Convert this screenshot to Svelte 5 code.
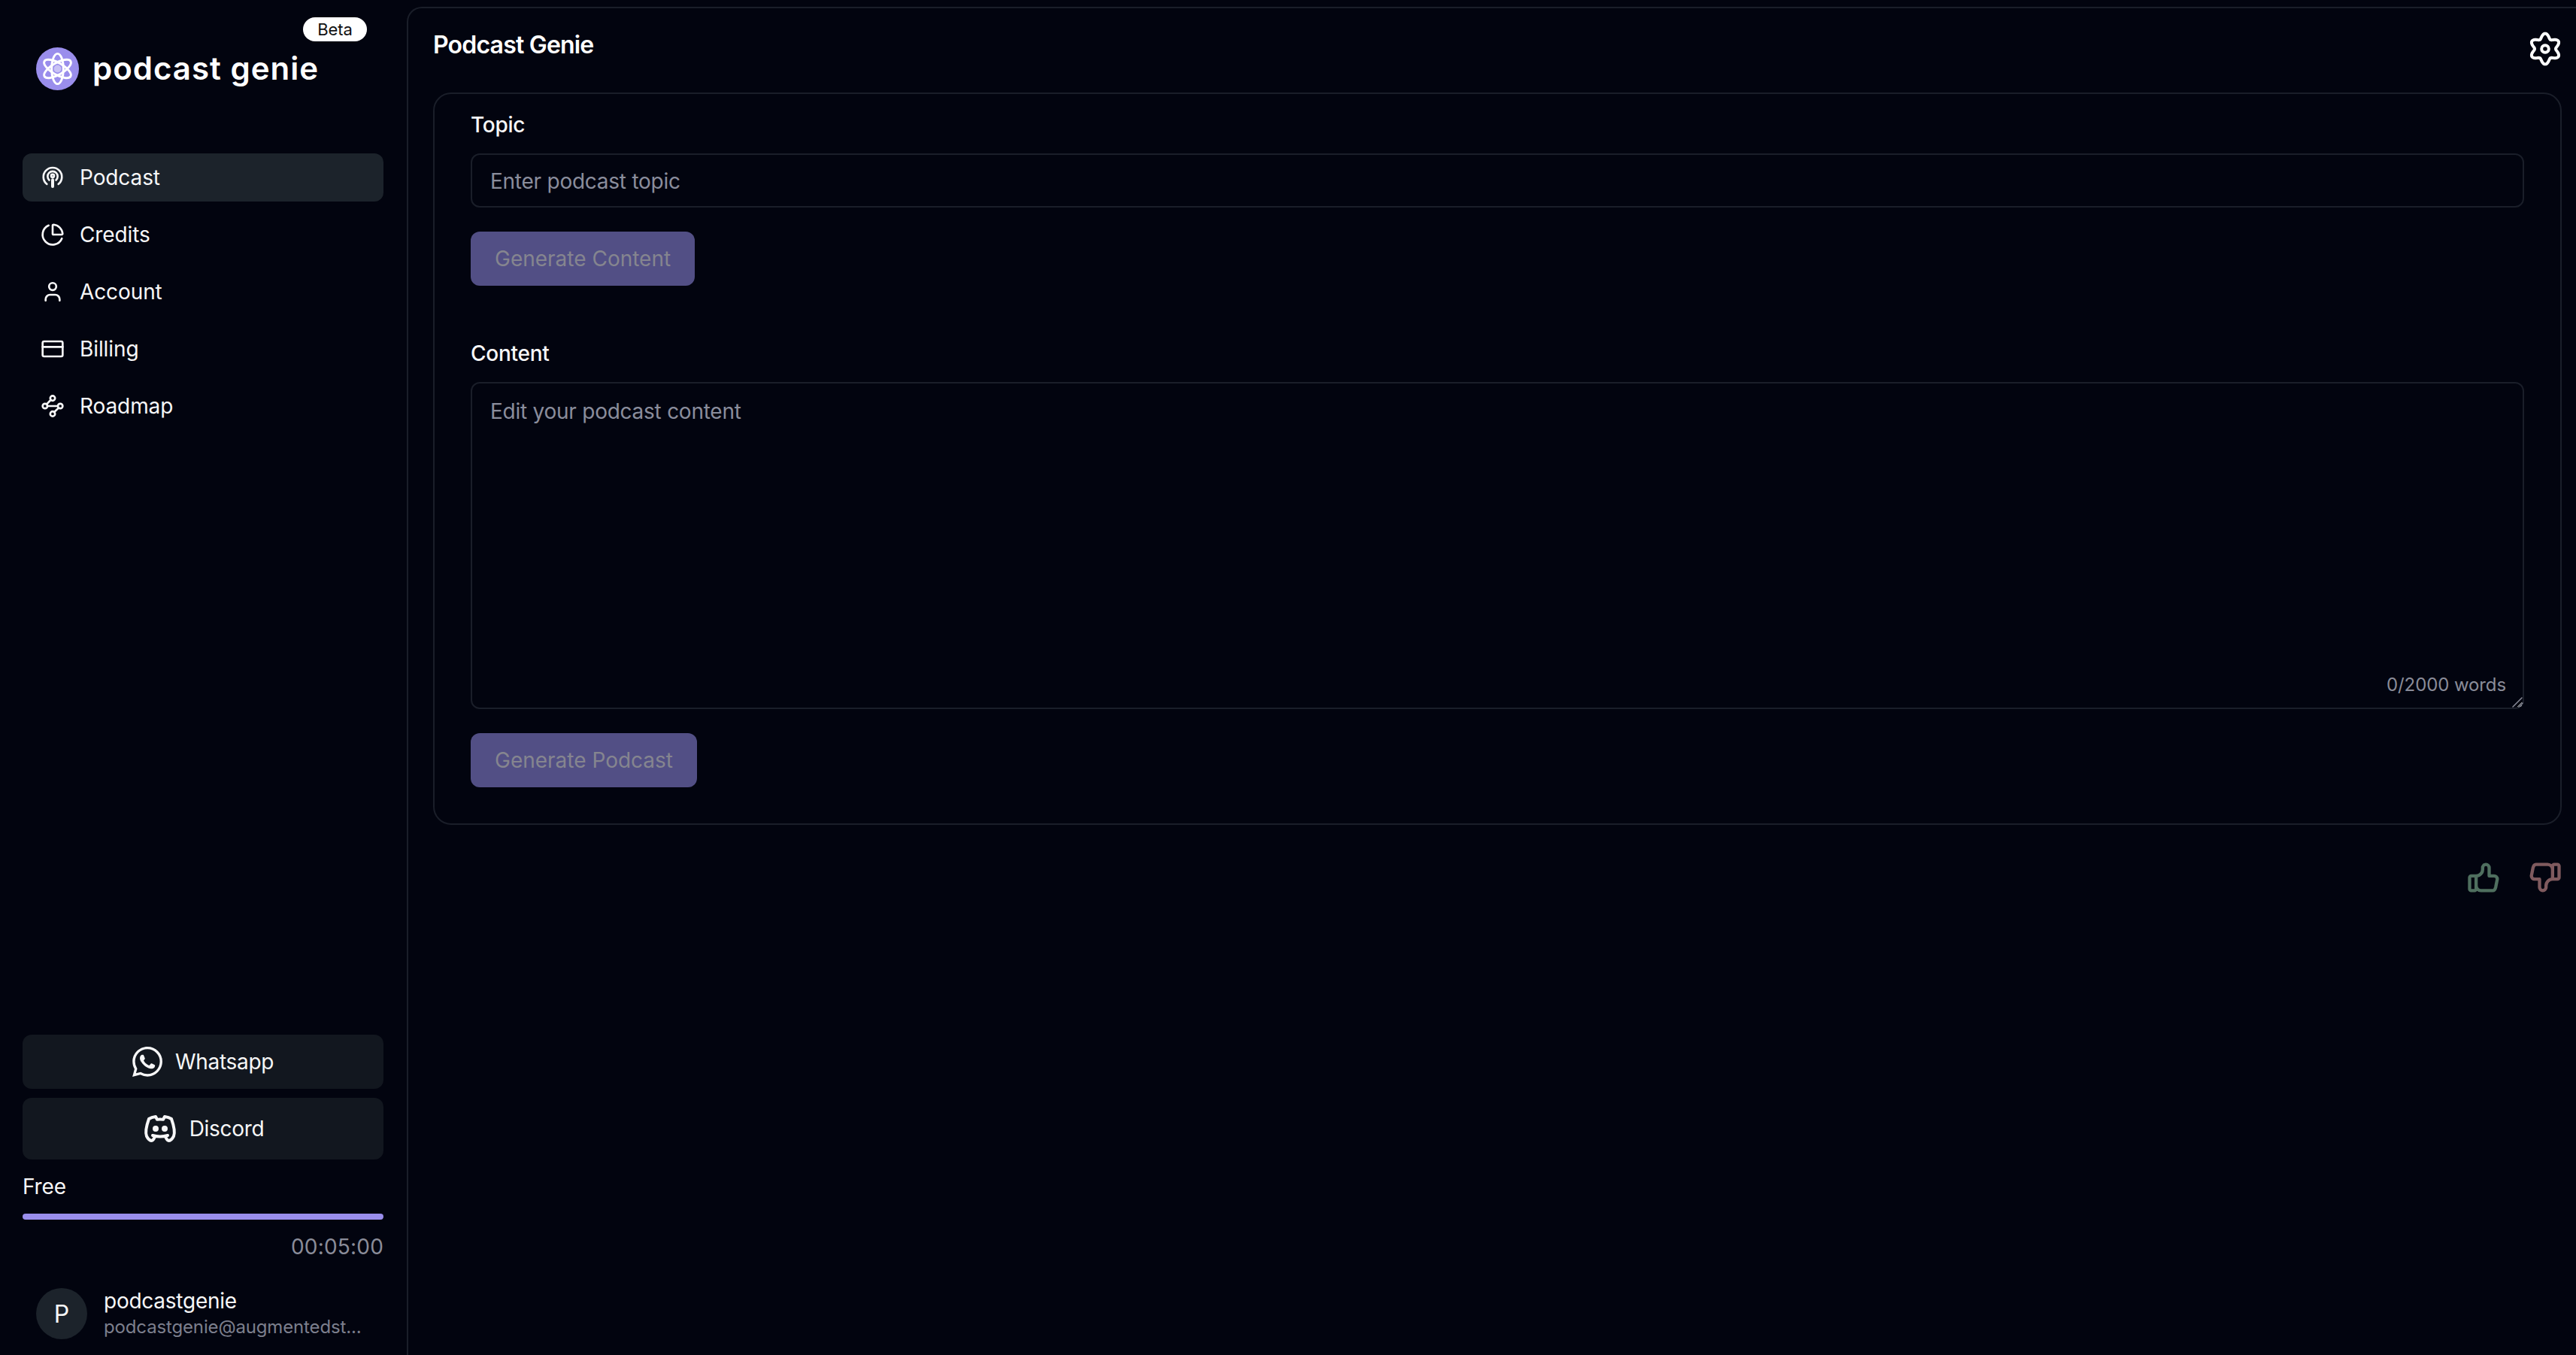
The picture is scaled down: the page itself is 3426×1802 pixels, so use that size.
<script>
  const nav = ['Podcast', 'Credits', 'Account', 'Billing', 'Roadmap'];

  // six lobed cog outline, sampled in polar form
  const cog = Array.from({ length: 120 }, (_, i) => {
    const t = (i / 120) * Math.PI * 2;
    const r = 8.6 + 1.6 * Math.cos(6 * t);
    return `${(12 + r * Math.sin(t)).toFixed(2)} ${(12 - r * Math.cos(t)).toFixed(2)}`;
  });
  const cogPath = 'M' + cog.join('L') + 'Z';
</script>

<div class="app">
  <aside class="sidebar">
    <span class="beta">Beta</span>
    <div class="brand">
      <svg class="logo" viewBox="0 0 58 58">
        <circle cx="29" cy="29" r="29" fill="#9a8eec" />
        <g fill="none" stroke="#fff" stroke-width="3">
          <ellipse cx="29" cy="29" rx="20.5" ry="8" transform="rotate(30 29 29)" />
          <ellipse cx="29" cy="29" rx="20.5" ry="8" transform="rotate(90 29 29)" />
          <ellipse cx="29" cy="29" rx="20.5" ry="8" transform="rotate(150 29 29)" />
        </g>
        <circle cx="29" cy="29" r="5" fill="#c9c2f5" />
      </svg>
      <span class="wordmark">podcast genie</span>
    </div>

    <nav class="nav">
      {#each nav as item, i}
        <a class="nav-item" class:active={i === 0} href="#top">
          <svg class="icon" viewBox="0 0 24 24">
            {#if item === 'Podcast'}
              <path d="M6.2 18.6a9.2 9.2 0 1 1 11.6 0" />
              <path d="M8.6 14.6a5 5 0 1 1 6.8 0" />
              <circle cx="12" cy="10.4" r="1.5" />
              <path d="M12 14.5v6.5" stroke-width="3" />
            {:else if item === 'Credits'}
              <path d="M21 12c.552 0 1.005-.449.95-.998a10 10 0 0 0-8.953-8.951c-.55-.055-.998.398-.998.95v8a1 1 0 0 0 1 1z" />
              <path d="M21.21 15.89A10 10 0 1 1 8 2.83" />
            {:else if item === 'Account'}
              <circle cx="12" cy="6.8" r="3.6" />
              <path d="M5 20.8v-1.3a4.5 4.5 0 0 1 4.5-4.5h5a4.5 4.5 0 0 1 4.5 4.5v1.3" />
            {:else if item === 'Billing'}
              <rect x="2" y="4.5" width="20" height="15" rx="1.5" />
              <path d="M2 10h20" />
            {:else}
              <circle cx="12" cy="4.2" r="2.4" />
              <circle cx="4.4" cy="12" r="2.4" />
              <circle cx="19.6" cy="12" r="2.4" />
              <circle cx="12" cy="19.8" r="2.4" />
              <path d="M10.2 5.8 6 10.2M6.8 12h10.4M13.6 18l4.4-4.2" />
            {/if}
          </svg>
          <span>{item}</span>
        </a>
      {/each}
    </nav>

    <div class="foot">
      <button class="social whatsapp">
        <svg class="wa" viewBox="0 0 24 24">
          <path d="M17.472 14.382c-.297-.149-1.758-.867-2.03-.967-.273-.099-.471-.148-.67.15-.197.297-.767.966-.94 1.164-.173.199-.347.223-.644.075-.297-.15-1.255-.463-2.39-1.475-.883-.788-1.48-1.761-1.653-2.059-.173-.297-.018-.458.13-.606.134-.133.298-.347.446-.52.149-.174.198-.298.298-.497.099-.198.05-.371-.025-.52-.075-.149-.669-1.612-.916-2.207-.242-.579-.487-.5-.669-.51-.173-.008-.371-.01-.57-.01-.198 0-.52.074-.792.372-.272.297-1.04 1.016-1.04 2.479 0 1.462 1.065 2.875 1.213 3.074.149.198 2.096 3.2 5.077 4.487.709.306 1.262.489 1.694.625.712.227 1.36.195 1.871.118.571-.085 1.758-.719 2.006-1.413.248-.694.248-1.289.173-1.413-.074-.124-.272-.198-.57-.347m-5.421 7.403h-.004a9.87 9.87 0 01-5.031-1.378l-.361-.214-3.741.982.998-3.648-.235-.374a9.86 9.86 0 01-1.51-5.26c.001-5.45 4.436-9.884 9.888-9.884 2.64 0 5.122 1.03 6.988 2.898a9.825 9.825 0 012.893 6.994c-.003 5.45-4.437 9.884-9.885 9.884m8.413-18.297A11.815 11.815 0 0012.05 0C5.495 0 .16 5.335.157 11.892c0 2.096.547 4.142 1.588 5.945L.057 24l6.305-1.654a11.882 11.882 0 005.683 1.448h.005c6.554 0 11.89-5.335 11.893-11.893a11.821 11.821 0 00-3.48-8.413z" />
        </svg>
        Whatsapp
      </button>
      <button class="social discord">
        <svg class="dc" viewBox="0 0 24 24">
          <path d="M8 12a1 1 0 1 0 2 0a1 1 0 0 0 -2 0" />
          <path d="M14 12a1 1 0 1 0 2 0a1 1 0 0 0 -2 0" />
          <path d="M15.5 17c0 1 1.5 3 2 3c1.5 0 2.833 -1.667 3.5 -3c.667 -1.667 .5 -5.833 -1.5 -11.5c-1.457 -1.015 -3 -1.34 -4.5 -1.5l-.972 1.923a11.913 11.913 0 0 0 -4.053 0l-.975 -1.923c-1.5 .16 -3.043 .485 -4.5 1.5c-2 5.667 -2.167 9.833 -1.5 11.5c.667 1.333 2 3 3.5 3c.5 0 2 -2 2 -3" />
          <path d="M7 16.5c3.5 1 6.5 1 10 0" />
        </svg>
        Discord
      </button>

      <div class="plan">Free</div>
      <div class="bar"><div class="fill" style="width: 100%"></div></div>
      <div class="time">00:05:00</div>

      <div class="user">
        <div class="avatar">P</div>
        <div class="who">
          <div class="name">podcastgenie</div>
          <div class="email">podcastgenie@augmentedst...</div>
        </div>
      </div>
    </div>
  </aside>

  <main class="main">
    <header class="top">
      <h1>Podcast Genie</h1>
      <svg class="gear" viewBox="0 0 24 24">
        <path d={cogPath} />
        <circle cx="12" cy="12" r="2.4" />
      </svg>
    </header>

    <section class="card">
      <label class="field">
        <span class="label">Topic</span>
        <input type="text" placeholder="Enter podcast topic" />
      </label>
      <button class="primary" disabled>Generate Content</button>

      <label class="field content">
        <span class="label">Content</span>
        <span class="area">
          <textarea placeholder="Edit your podcast content"></textarea>
          <span class="count">0/2000 words</span>
          <svg class="grip" viewBox="0 0 16 14">
            <path d="M2 13 14 1M10 13l5-5" />
          </svg>
        </span>
      </label>
      <button class="primary" disabled>Generate Podcast</button>
    </section>

    <div class="feedback">
      <svg class="thumb up" viewBox="0 0 24 24">
        <path d="M7 11v8a1 1 0 0 1 -1 1h-2a1 1 0 0 1 -1 -1v-7a1 1 0 0 1 1 -1h3a4 4 0 0 0 4 -4v-1a2 2 0 0 1 4 0v5h3a2 2 0 0 1 2 2l-1 5a2 3 0 0 1 -2 2h-7a3 3 0 0 1 -3 -3" />
      </svg>
      <svg class="thumb down" viewBox="0 0 24 24">
        <path d="M7 13v-8a1 1 0 0 0 -1 -1h-2a1 1 0 0 0 -1 1v7a1 1 0 0 0 1 1h3a4 4 0 0 1 4 4v1a2 2 0 0 0 4 0v-5h3a2 2 0 0 0 2 -2l-1 -5a2 3 0 0 0 -2 -2h-7a3 3 0 0 0 -3 3" />
      </svg>
    </div>
  </main>
</div>

<style>
  :global(body) {
    margin: 0;
    background: #02040f;
  }

  .app {
    display: flex;
    height: 100vh;
    overflow: hidden;
    background: #02040f;
    color: #f7f7f8;
    font-family: Inter, 'Liberation Sans', sans-serif;
    font-size: 28px;
    letter-spacing: -0.1px;
  }

  svg {
    flex: none;
    fill: none;
    stroke: currentColor;
    stroke-width: 2;
    stroke-linecap: round;
    stroke-linejoin: round;
  }

  .sidebar {
    position: relative;
    box-sizing: border-box;
    flex: none;
    width: 541px;
    padding: 63px 31px 20px 30px;
    display: flex;
    flex-direction: column;
  }

  .beta {
    position: absolute;
    top: 23px;
    left: 403px;
    width: 85px;
    height: 32px;
    border-radius: 16px;
    background: #fff;
    color: #111;
    font-size: 22px;
    line-height: 32px;
    text-align: center;
  }

  .brand {
    display: flex;
    align-items: center;
    gap: 18px;
    padding-left: 18px;
    height: 57px;
  }

  .logo {
    width: 57px;
    height: 57px;
    stroke: none;
  }

  .wordmark {
    font-weight: 600;
    font-size: 42px;
    letter-spacing: 1px;
    line-height: 54px;
    margin-top: -2px;
    color: #fff;
  }

  .nav {
    margin-top: 84px;
    display: flex;
    flex-direction: column;
    gap: 12px;
  }

  .nav-item {
    display: flex;
    align-items: center;
    gap: 20px;
    height: 64px;
    padding-left: 24px;
    border-radius: 12px;
    color: #f7f7f8;
    text-decoration: none;
  }

  .nav-item.active {
    background: #1c232b;
  }

  .icon {
    width: 32px;
    height: 32px;
  }

  .foot {
    margin-top: auto;
    display: flex;
    flex-direction: column;
  }

  .social {
    display: flex;
    align-items: center;
    justify-content: center;
    border: none;
    border-radius: 12px;
    background: #12171f;
    color: #f7f7f8;
    font: inherit;
    letter-spacing: -0.3px;
  }

  .whatsapp {
    height: 72px;
    gap: 17px;
  }

  .discord {
    height: 82px;
    gap: 15px;
    margin-top: 12px;
  }

  .wa {
    width: 40px;
    height: 40px;
    fill: currentColor;
    stroke: none;
  }

  .dc {
    width: 48px;
    height: 48px;
  }

  .plan {
    margin-top: 19px;
    line-height: 34px;
  }

  .bar {
    margin-top: 19px;
    height: 8px;
    border-radius: 4px;
    background: #1c232b;
    overflow: hidden;
  }

  .fill {
    height: 100%;
    background: #9a8eec;
  }

  .time {
    margin-top: 19px;
    line-height: 34px;
    letter-spacing: 0.2px;
    text-align: right;
    color: #8a8c99;
  }

  .user {
    margin-top: 37px;
    display: flex;
    align-items: center;
    gap: 22px;
    padding-left: 18px;
  }

  .avatar {
    width: 68px;
    height: 68px;
    border-radius: 50%;
    background: #1c232b;
    display: flex;
    align-items: center;
    justify-content: center;
    font-size: 32px;
  }

  .name {
    line-height: 36px;
    letter-spacing: -0.25px;
  }

  .email {
    font-size: 24px;
    line-height: 34px;
    letter-spacing: -0.15px;
    color: #7c7f8d;
  }

  .main {
    box-sizing: border-box;
    flex: 1;
    min-width: 0;
    margin-top: 9px;
    padding: 0 19px 0 33px;
    border-top: 2px solid #1a1e29;
    border-left: 2px solid #1a1e29;
    border-top-left-radius: 20px;
  }

  .top {
    display: flex;
    align-items: center;
    justify-content: space-between;
    height: 112px;
    padding-bottom: 16px;
    box-sizing: border-box;
  }

  h1 {
    margin: 0;
    font-size: 32px;
    font-weight: 600;
    letter-spacing: -0.8px;
    color: #fff;
  }

  .gear {
    width: 48px;
    height: 48px;
    color: #fff;
    margin-right: -2px;
    margin-top: 12px;
  }

  .card {
    box-sizing: border-box;
    height: 974px;
    padding: 24px 48px 0;
    border: 2px solid #1a1e29;
    border-radius: 24px;
    display: flex;
    flex-direction: column;
    align-items: flex-start;
  }

  .field {
    display: flex;
    flex-direction: column;
    align-self: stretch;
  }

  .label {
    font-weight: 500;
    line-height: 34px;
    margin-bottom: 21px;
    color: #f7f7f8;
    letter-spacing: -0.25px;
  }

  input,
  textarea {
    box-sizing: border-box;
    width: 100%;
    border: 2px solid #1a1e29;
    border-radius: 12px;
    background: transparent;
    color: #f7f7f8;
    font: inherit;
    letter-spacing: -0.25px;
    outline: none;
  }

  input {
    height: 72px;
    padding: 2px 24px 0;
  }

  textarea {
    display: block;
    height: 435px;
    padding: 20px 24px;
    resize: vertical;
  }

  input::placeholder,
  textarea::placeholder {
    color: #8a8d9c;
    opacity: 1;
  }

  .area {
    position: relative;
    display: block;
  }

  .count {
    position: absolute;
    right: 24px;
    bottom: 17px;
    font-size: 24px;
    line-height: 30px;
    color: #8a8c99;
  }

  .grip {
    position: absolute;
    right: 1px;
    bottom: 2px;
    width: 16px;
    height: 14px;
    color: #8a8c99;
    stroke-width: 1.5;
  }

  .primary {
    margin-top: 32px;
    height: 72px;
    padding: 0 32px;
    border: none;
    border-radius: 12px;
    background: #524f85;
    color: #85858f;
    font: inherit;
    letter-spacing: 0;
  }

  .content {
    margin-top: 73px;
  }

  .feedback {
    display: flex;
    justify-content: flex-end;
    gap: 28px;
    margin-top: 44px;
    margin-right: -3px;
  }

  .thumb {
    width: 52px;
    height: 52px;
  }

  .up {
    color: #4f6f5f;
  }

  .down {
    color: #7f5a5e;
    transform: scaleX(-1);
  }
</style>
